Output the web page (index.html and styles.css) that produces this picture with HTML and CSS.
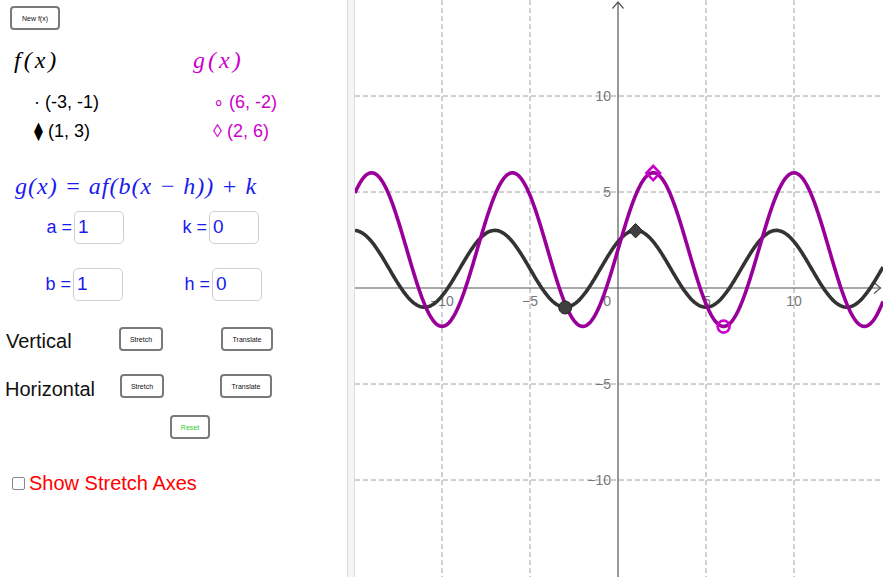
FILE: index.html
```html
<!DOCTYPE html>
<html>
<head>
<meta charset="utf-8">
<link rel="stylesheet" href="styles.css">
</head>
<body>
<div class="app">
  <div class="panel">
    <div class="row-top"><button class="btn btn-new">New f(x)</button></div>
    <div class="row-fn">
      <span class="math fn-l">f(x)</span>
      <span class="math magenta">g(x)</span>
    </div>
    <div class="row-pt r1">
      <span class="col-l pt">· (-3, -1)</span>
      <span class="col-r pt magenta">∘ (6, -2)</span>
    </div>
    <div class="row-pt r2">
      <span class="col-l pt">⧫ (1, 3)</span>
      <span class="col-r pt magenta">◊ (2, 6)</span>
    </div>
    <div class="row-formula math blue">g(x) = af(b(x − h)) + k</div>
    <div class="row-param p1">
      <span class="plabel blue la">a =</span><span class="pbox blue">1</span>
      <span class="plabel blue lk">k =</span><span class="pbox blue">0</span>
    </div>
    <div class="row-param p2">
      <span class="plabel blue lb">b =</span><span class="pbox blue">1</span>
      <span class="plabel blue lh">h =</span><span class="pbox blue">0</span>
    </div>
    <div class="row-tr t1">
      <span class="tlabel">Vertical</span>
      <button class="btn btn-s">Stretch</button>
      <button class="btn btn-t">Translate</button>
    </div>
    <div class="row-tr t2">
      <span class="tlabel">Horizontal</span>
      <button class="btn btn-s">Stretch</button>
      <button class="btn btn-t">Translate</button>
    </div>
    <div class="row-reset"><button class="btn btn-reset">Reset</button></div>
    <div class="row-check"><span class="cbox"></span><span class="ctext">Show Stretch Axes</span></div>
  </div>
  <div class="divider"></div>
  <svg class="graph" width="528" height="577" viewBox="355 0 528 577">
    <g class="grid">
      <line x1="442" y1="0" x2="442" y2="577"/>
      <line x1="530" y1="0" x2="530" y2="577"/>
      <line x1="706" y1="0" x2="706" y2="577"/>
      <line x1="794" y1="0" x2="794" y2="577"/>
      <line x1="355" y1="96" x2="883" y2="96"/>
      <line x1="355" y1="192" x2="883" y2="192"/>
      <line x1="355" y1="384" x2="883" y2="384"/>
      <line x1="355" y1="480" x2="883" y2="480"/>
    </g>
    <g class="axes">
      <line x1="355" y1="288" x2="881" y2="288"/>
      <line x1="618" y1="2" x2="618" y2="577"/>
      <polyline points="874,282.5 880.5,288 874,293.5"/>
      <polyline points="612.5,8.5 618,2 623.5,8.5"/>
    </g>
    <g class="ticks">
      <text x="442" y="306" text-anchor="middle">−10</text>
      <text x="530" y="306" text-anchor="middle">−5</text>
      <text x="611" y="306" text-anchor="end">0</text>
      <text x="707" y="306" text-anchor="middle">5</text>
      <text x="794" y="306" text-anchor="middle">10</text>
      <text x="611" y="101" text-anchor="end">10</text>
      <text x="611" y="197" text-anchor="end">5</text>
      <text x="611" y="389" text-anchor="end">−5</text>
      <text x="611" y="485" text-anchor="end">−10</text>
    </g>
    <path id="fcurve" class="fcurve" d=""/>
    <path id="gcurve" class="gcurve" d=""/>
    <circle class="fpt" cx="565.2" cy="307.5" r="6.5"/>
    <polygon class="fpt" points="635.6,223.5 642.6,230.7 635.6,237.9 628.6,230.7"/>
    <circle class="gpt" cx="723.6" cy="326.6" r="6"/>
    <polygon class="gpt" points="653.2,166 660,173.1 653.2,180.2 646.4,173.1"/>
  </svg>
</div>
<script src="script.js"></script>
</body>
</html>
```

FILE: styles.css
```css
html, body {
  margin: 0;
  padding: 0;
  background: #fff;
}
.app {
  display: flex;
  width: 883px;
  height: 577px;
  font-family: "Liberation Sans", Arial, sans-serif;
}
.panel {
  width: 347px;
  flex: none;
  display: flex;
  flex-direction: column;
}
.divider {
  width: 6px;
  flex: none;
  background: #f5f5f5;
  border-left: 1px solid #dcdcdc;
  border-right: 1px solid #dcdcdc;
}
.graph {
  display: block;
  flex: none;
}
.btn {
  font-family: "Liberation Sans", Arial, sans-serif;
  background: #fff;
  border: 2px solid #7a7a7a;
  border-radius: 4px;
  padding: 0;
  color: #111;
  font-size: 7px;
  box-sizing: border-box;
}
.row-top {
  height: 35px;
  padding-left: 10px;
  padding-top: 6px;
  box-sizing: border-box;
}
.btn-new {
  width: 50px;
  height: 24px;
}
.math {
  font-family: "Liberation Serif", "DejaVu Serif", serif;
  font-style: italic;
}
.magenta { color: #cc00cc; }
.blue { color: #1a1aee; }
.row-fn {
  display: flex;
  align-items: center;
  height: 40px;
  margin-top: 5px;
  font-size: 24px;
  letter-spacing: 3px;
}
.fn-l {
  width: 193px;
  padding-left: 14px;
  box-sizing: border-box;
}
.col-l {
  width: 179px;
  padding-left: 14px;
  box-sizing: border-box;
}
.row-pt {
  display: flex;
  align-items: center;
  height: 28px;
  font-size: 18px;
}
.row-pt.r1 { margin-top: 8px; }
.row-pt.r2 { margin-top: 1px; }
.pt.col-l { padding-left: 34px; width: 213px; }
.row-formula {
  height: 32px;
  margin-top: 25px;
  padding-left: 15px;
  font-size: 24px;
  letter-spacing: 1px;
  display: flex;
  align-items: center;
}
.row-param {
  display: flex;
  align-items: center;
  height: 34px;
  font-size: 18px;
}
.row-param.p1 { margin-top: 8px; }
.row-param.p2 { margin-top: 23px; }
.plabel {
  box-sizing: border-box;
  padding-right: 2px;
  text-align: right;
}
.la { width: 74px; }
.lb { width: 73px; }
.lk { width: 85px; }
.lh { width: 89px; }
.pbox {
  width: 50px;
  height: 33px;
  border: 1px solid #cfcfcf;
  border-radius: 5px;
  box-sizing: border-box;
  padding-left: 3px;
  font-size: 19px;
  display: flex;
  align-items: center;
}
.row-tr {
  display: flex;
  align-items: flex-start;
  height: 30px;
}
.row-tr.t1 { margin-top: 26px; }
.row-tr.t2 { margin-top: 17px; }
.tlabel {
  font-size: 20px;
  color: #111;
  width: 119px;
  padding-left: 6px;
  box-sizing: border-box;
  margin-top: 3px;
  line-height: 23px;
}
.t2 .tlabel { padding-left: 5px; width: 120px; margin-top: 4px; }
.btn-s {
  width: 44px;
  height: 24px;
  font-size: 7px;
}
.btn-t {
  width: 52px;
  height: 24px;
  margin-left: 58px;
  font-size: 7px;
}
.t2 .btn-t { margin-left: 56px; }
.row-reset {
  margin-top: 11px;
  padding-left: 170px;
  height: 24px;
}
.btn-reset {
  width: 40px;
  height: 24px;
  color: #33cc33;
  font-size: 7px;
}
.row-check {
  display: flex;
  align-items: center;
  margin-top: 32px;
  padding-left: 12px;
  height: 24px;
}
.cbox {
  width: 13px;
  height: 13px;
  border: 1px solid #888;
  border-radius: 2px;
  box-sizing: border-box;
  margin-right: 4px;
}
.ctext {
  color: #ff0000;
  font-size: 20px;
}
.grid line {
  stroke: #a0a0a0;
  stroke-width: 1;
  stroke-dasharray: 5 3;
}
.axes line, .axes polyline {
  stroke: #555;
  stroke-width: 1.2;
  fill: none;
}
.ticks text {
  font-family: "Liberation Sans", Arial, sans-serif;
  font-size: 14px;
  fill: #777;
}
.fcurve {
  fill: none;
  stroke: #333;
  stroke-width: 3.6;
  stroke-linejoin: round;
}
.gcurve {
  fill: none;
  stroke: #990099;
  stroke-width: 3.6;
  stroke-linejoin: round;
}
.fpt {
  fill: #404040;
  stroke: #222;
  stroke-width: 1;
}
.gpt {
  fill: none;
  stroke: #cc00cc;
  stroke-width: 2.6;
}
```

FILE: script.js
```js
(function () {
  function Y(y) { return 288 - 19.2 * y; }
  function build(fn) {
    var d = '';
    for (var px = 355; px <= 883; px += 1) {
      var x = (px - 618) / 17.6;
      var py = Y(fn(x));
      d += (d ? ' L' : 'M') + px + ',' + py.toFixed(2);
    }
    return d;
  }
  var f = function (x) { return 2 * Math.cos(Math.PI * (x - 1) / 4) + 1; };
  var g = function (x) { return 4 * Math.cos(Math.PI * (x - 2) / 4) + 2; };
  document.getElementById('fcurve').setAttribute('d', build(f));
  document.getElementById('gcurve').setAttribute('d', build(g));
})();
```
